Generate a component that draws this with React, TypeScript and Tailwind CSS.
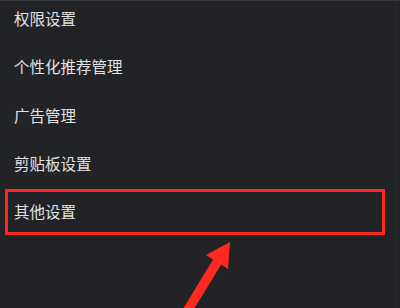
const items = ["权限设置", "个性化推荐管理", "广告管理", "剪贴板设置"]

function Arrow() {
  return (
    <svg
      className="absolute left-0 top-0 pointer-events-none"
      width="400"
      height="308"
      viewBox="0 0 400 308"
    >
      <line x1="186" y1="312" x2="219" y2="258" stroke="#ff2a1f" strokeWidth="9.5" />
      <polygon points="230,241 206,254 228,268" fill="#ff2a1f" />
    </svg>
  )
}

export default function App() {
  return (
    <div
      className="relative w-[400px] h-[308px] overflow-hidden bg-[#222327] border-t border-[#34353a] text-[#e2e2e2] text-[15.5px]"
      style={{ fontFamily: '"Noto Sans CJK SC", "Noto Sans", sans-serif' }}
    >
      <div className="flex flex-col -mt-[7px]">
        {items.map((label) => (
          <div key={label} className="h-[48.5px] flex items-center pl-[14px]">
            {label}
          </div>
        ))}
        <div className="mt-[1px] ml-[5px] w-[380px] h-[46px] border-[3px] border-[#ff2a1f] flex items-center pl-[6px]">
          其他设置
        </div>
      </div>
      <div className="absolute right-[3px] top-0 w-[1px] h-full bg-[#2c2d31]" />
      <Arrow />
    </div>
  )
}
